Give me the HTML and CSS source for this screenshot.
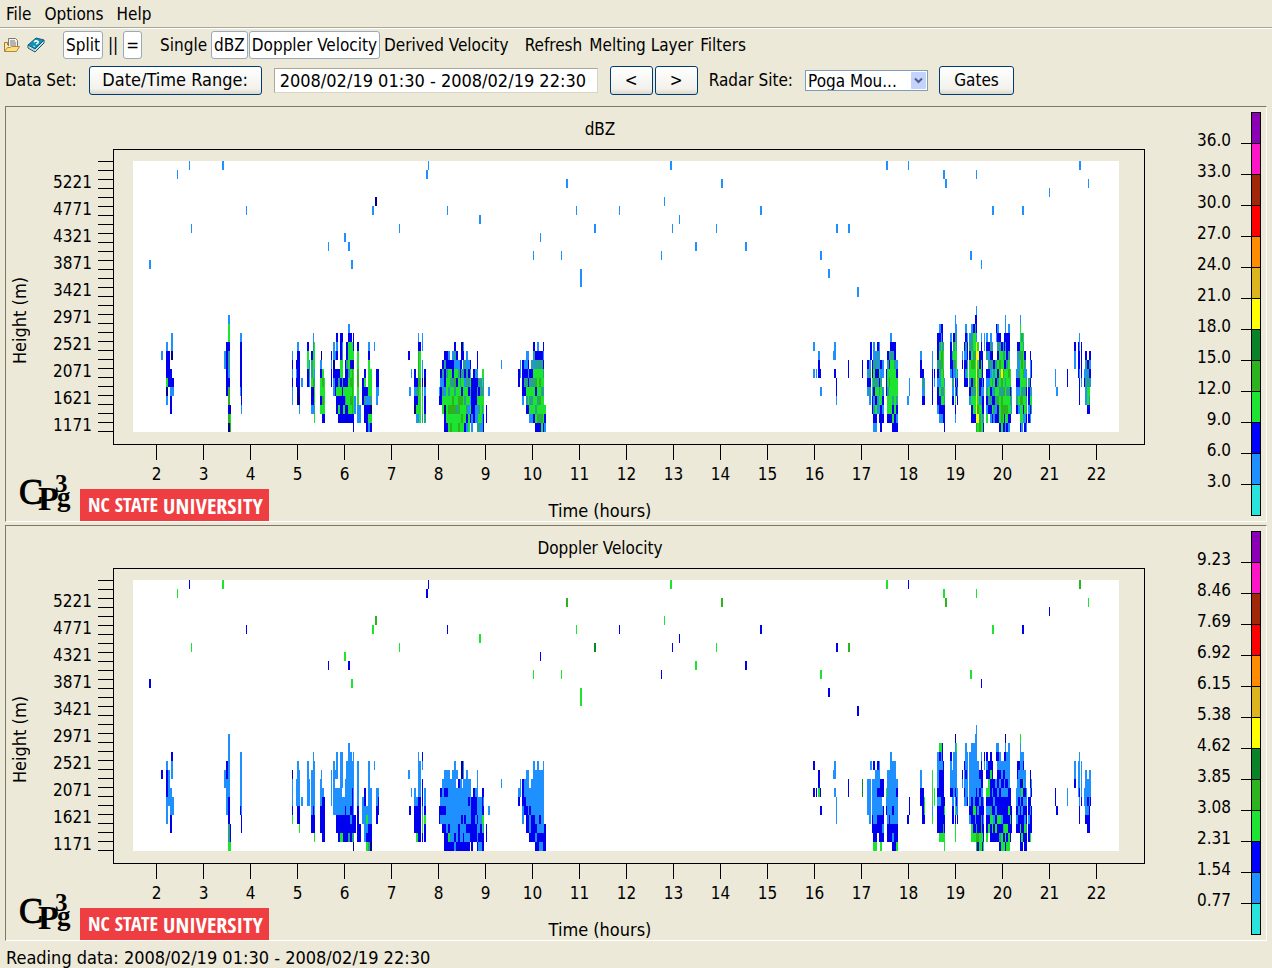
FILE: index.html
```html
<!DOCTYPE html>
<html lang="en">
<head>
<meta charset="utf-8">
<title>Radar Profile Viewer</title>
<link rel="stylesheet" href="styles.css">
</head>
<body>
<nav class="menubar">
  <button class="menu">File</button>
  <button class="menu">Options</button>
  <button class="menu">Help</button>
</nav>
<div class="toolbar">
  <button class="icon-btn" aria-label="Open">
    <svg width="16" height="16" viewBox="0 0 16 16">
      <path d="M4.500 9V1.500h7l2 2V9" fill="#f4f2e8" stroke="#77777a"/>
      <path d="M6 4h5M6 6h6M6 8h6" stroke="#77777a"/>
      <path d="M.5 14.500V5.500h3v2.500" fill="#fbe9a0" stroke="#a08030"/>
      <path d="M.5 14.500l3-4h3l1-1h8l-3 5z" fill="#ffdf80" stroke="#b08a38"/>
    </svg>
  </button>
  <button class="icon-btn" aria-label="Help book">
    <svg width="18" height="16" viewBox="0 0 18 16">
      <path d="M1 8v3l7 4 9-9V3" fill="#e8f4f4" stroke="#0b5670"/>
      <path d="M2 10.500l6 3 8-8" fill="none" stroke="#a8c8c8"/>
      <path d="M1 8l8-7 8 2-9 9z" fill="#1493b4" stroke="#0a5c7c"/>
      <path d="M7 5q2-2 4-.5 1 1.500-2 2.500M7.500 9l-.8.6" fill="none" stroke="#fff" stroke-width="1.500"/>
    </svg>
  </button>
  <div class="group">
    <button class="tool on">Split</button>
    <button class="tool">||</button>
    <button class="tool on">=</button>
  </div>
  <div class="group tight">
    <button class="tool">Single</button>
    <button class="tool on">dBZ</button>
    <button class="tool on">Doppler Velocity</button>
    <button class="tool">Derived Velocity</button>
  </div>
  <div class="group actions">
    <button class="tool">Refresh</button>
    <button class="tool">Melting Layer</button>
    <button class="tool">Filters</button>
  </div>
</div>
<div class="controls">
  <label for="range">Data Set:</label>
  <button class="push wide">Date/Time Range:</button>
  <input class="range" id="range" type="text" value="2008/02/19 01:30 - 2008/02/19 22:30">
  <div class="steps">
    <button class="push step">&lt;</button>
    <button class="push step">&gt;</button>
  </div>
  <label for="site">Radar Site:</label>
  <div class="combo">
    <select id="site"><option>Poga Mou...</option></select>
    <svg class="arrow" width="15" height="17" viewBox="0 0 15 17">
      <rect width="15" height="17" rx="1" fill="#c3d3fd"/>
      <path d="M4 6.500l3.500 3.500L11 6.500" fill="none" stroke="#4d6185" stroke-width="2"/>
    </svg>
  </div>
  <button class="push gates">Gates</button>
</div>
<main class="panels">
  <section class="panel" data-series="0" data-title="dBZ" data-scale="36.0 33.0 30.0 27.0 24.0 21.0 18.0 15.0 12.0 9.0 6.0 3.0"></section>
  <section class="panel" data-series="1" data-title="Doppler Velocity" data-scale="9.23 8.46 7.69 6.92 6.15 5.38 4.62 3.85 3.08 2.31 1.54 0.77"></section>
</main>
<footer class="status">Reading data: 2008/02/19 01:30 - 2008/02/19 22:30</footer>
<template id="chart">
  <div class="chart">
    <h2 class="title"></h2>
    <div class="ytitle"><span>Height (m)</span></div>
    <div class="ylabels"></div>
    <div class="yticks"></div>
    <div class="frame"><svg class="data" viewBox="0 0 986 270" preserveAspectRatio="none" shape-rendering="crispEdges"></svg></div>
    <div class="xlabels"></div>
    <div class="xtitle">Time (hours)</div>
    <div class="logos">
      <svg class="cpg" width="56" height="56" viewBox="0 -10 56 56" role="img" aria-label="CP3g">
        <text class="serif c" x="1" y="29">C</text>
        <text class="serif p" x="20" y="35">P</text>
        <text class="serif three" x="37" y="17">3</text>
        <text class="serif g" x="39" y="31">g</text>
      </svg>
      <div class="ncsu"><b>NC STATE</b><span>UNIVERSITY</span></div>
    </div>
  </div>
  <div class="scale"></div>
</template>
<script src="chart.js"></script>
</body>
</html>
```
FILE: styles.css
```css
* { box-sizing: border-box; }
body {
  margin: 0;
  min-height: 100vh;
  display: flex;
  flex-direction: column;
  background: #ece9d8;
  color: #000;
  font: 17px/20px "DejaVu Sans Condensed", "DejaVu Sans", sans-serif;
}
button, input, select { font: inherit; color: inherit; margin: 0; }
button { padding: 0; border: 0; background: none; white-space: nowrap; }
.menubar {
  display: flex;
  gap: 13px;
  height: 28px;
  padding: 0 6px;
  align-items: center;
  border-bottom: 1px solid #aca899;
}
.toolbar {
  display: flex;
  align-items: center;
  height: 34px;
  padding: 0 0 2px 4px;
  border-top: 1px solid #fff;
}
.icon-btn { display: flex; margin-right: 7px; }
.group { display: flex; align-items: center; gap: 4px; margin-left: 11px; }
.group.tight { gap: 1px; margin-left: 15px; }
.group.actions { gap: 5px; margin-left: 12px; }
.tool { height: 28px; padding: 0 2px; border: 1px solid transparent; border-radius: 3px; }
.tool.on { background: #fff; border-color: #98a9b8; }
.group:not(.tight) .tool.on { padding: 0 2px; }
.group:not(.tight) .tool:not(.on) { padding: 0; }
.controls { display: flex; align-items: center; height: 36px; padding-left: 5px; }
.push {
  height: 29px;
  border: 1px solid #003c74;
  border-radius: 3px;
  background: linear-gradient(#fff, #f2f1ec 80%, #dcd8cc);
}
.wide { width: 173px; margin: 0 12px; font-size: 18px; }
.range {
  width: 324px;
  height: 25px;
  padding: 0 5px;
  border: 1px solid #aca899;
  border-right-color: #d8d5c6;
  border-bottom-color: #d8d5c6;
  background: #fff;
  font-size: 18px;
}
.steps { display: flex; gap: 2px; margin: 0 11px 0 12px; }
.step { width: 43px; }
.combo { display: flex; position: relative; margin: 0 11px 0 12px; }
.combo select {
  width: 123px;
  height: 21px;
  padding: 0 2px;
  appearance: none;
  border: 1px solid #7f9db9;
  border-radius: 0;
  background: #fff;
}
.arrow { position: absolute; right: 2px; top: 2px; pointer-events: none; }
.gates { width: 75px; }
.panels {
  flex: 1;
  display: flex;
  flex-direction: column;
  gap: 3px;
  padding: 8px 5px 0;
}
.panel {
  flex: 1;
  display: flex;
  border: 1px solid #7b7866;
  border-right-color: #fff;
  border-bottom-color: #fff;
}
.chart {
  flex: 1;
  display: grid;
  grid-template-columns: 24px 68px 15px 1fr 49px;
  grid-template-rows: 42px 1fr 30px 46px;
}
.title {
  grid-area: 1 / 1 / 2 / 6;
  margin: 0;
  padding-top: 12px;
  font: inherit;
  text-align: center;
}
.ytitle {
  grid-area: 1 / 1 / 5 / 2;
  display: flex;
  align-items: center;
  justify-content: center;
  padding: 14px 0 0 4px;
}
.ytitle span { writing-mode: vertical-rl; transform: rotate(180deg); font-size: 18px; }
.ylabels {
  grid-area: 2 / 2;
  display: flex;
  flex-direction: column;
  padding: 19px 6px 6px 0;
  text-align: right;
}
.ylabels span { flex: 1; display: flex; align-items: center; justify-content: flex-end; }
.yticks {
  grid-area: 2 / 3;
  display: flex;
  flex-direction: column;
  justify-content: space-between;
  padding: 12px 0 13px;
}
.yticks i { height: 1px; background: #000; }
.frame {
  grid-area: 2 / 4;
  display: flex;
  padding: 11px 25px 12px 19px;
  border: 1px solid #000;
}
.data { flex: 1; min-width: 0; width: 100%; height: 100%; background: #fff; }
.xlabels { grid-area: 3 / 4; display: flex; padding: 0 25px 0 20px; }
.xlabels span { flex: 1 1 0; text-align: center; }
.xlabels span::before {
  content: "";
  display: block;
  width: 1px;
  height: 15px;
  margin: 0 auto 4px;
  background: #000;
}
.xtitle { grid-area: 4 / 1 / 5 / 6; padding-top: 26px; text-align: center; font-size: 18px; }
.logos { grid-area: 4 / 1 / 5 / 5; display: flex; align-items: flex-end; padding-left: 12px; }
.cpg { margin-right: 6px; }
.serif { font-family: "Liberation Serif", serif; font-weight: bold; }
.c { font-size: 36px; font-weight: normal; stroke: #000; }
.p { font-size: 34px; }
.three { font-size: 25px; }
.g { font-size: 27px; }
.ncsu {
  display: flex;
  align-items: center;
  gap: 5px;
  width: 189px;
  height: 32px;
  padding-left: 8px;
  background: #ef3e42;
  color: #fff;
  font: 20px/32px "Open Sans Condensed", "Liberation Sans Narrow", "DejaVu Sans Condensed", sans-serif;
}
.ncsu span { font-size: 22px; font-weight: 300; }
.scale { display: flex; flex-direction: column; width: 72px; padding: 6px 5px 5px 0; }
.step-row { flex: 1; display: flex; }
.step-row span {
  flex: 1;
  align-self: flex-end;
  padding-right: 10px;
  line-height: 8px;
  text-align: right;
}
.step-row i { width: 10px; border-bottom: 1px solid #000; }
.step-row b { width: 10px; border: 1px solid #000; border-top: 0; }
.step-row:first-child b { border-top: 1px solid #000; margin-top: -1px; }
.step-row:last-child i { border: 0; }
.status { height: 27px; padding: 7px 6px 0; font-size: 18px; }
```
FILE: chart.js
```javascript
// Palette keys: L light blue, B blue, N navy, T teal, G/g/D greens, Y yellow.
const COLORS = { L: "#1e90ff", B: "#0000f0", N: "#000090", T: "#28a090", G: "#1de430", g: "#2db31e", D: "#0a8a28", Y: "#ffff00" };
const SCALE = ["#8b00b5", "#ff14c8", "#a02808", "#ff0000", "#ff8c00", "#dcb41e", "#ffff00", "#0a8228", "#2db31e", "#1de430", "#0000ff", "#1e90ff", "#28e4dc"];

// Isolated echoes: x, row, width, dBZ colour(s), velocity colour(s).
const POINTS = `16 11 2 L B|44 1 1 L G|56 0 1 L B|58 7 1 L G|89 0 2 L G|113 5 1 L B|195 9 1 L B|211 8 2 L G|215 9 2 L B|218 11 2 L G
239 5 2 L G|242 4 2 N g|266 7 1 L G|293 1 2 L B|295 0 1 L B|314 5 1 L B|346 6 2 L G|400 10 1 L G|407 8 1 L B|428 10 1 L G
433 2 2 L g|443 5 1 L G|447 12 2 LL GG|461 7 2 L D|486 5 1 L B|528 10 1 L B|531 4 1 L G|537 0 2 L G|539 7 1 L B|546 6 1 L B
562 9 2 L G|583 7 1 L G|588 2 2 L g|612 9 2 L B|627 5 2 L B|687 10 2 L G|695 12 2 L B|703 7 2 L B|715 7 2 L g|724 14 2 L B
753 0 2 L G|775 0 1 L B|810 1 2 L G|812 2 2 L g|837 10 2 L G|843 1 1 L G|848 11 1 L B|859 5 2 L G|889 5 2 L B|916 3 1 L B|946 0 2 L g|955 2 1 L G`;

// Echo columns: x, first row, width, dBZ colours by row, velocity colours by row.
const COLUMNS = `28 21 2 L B|33 20 2 LBBBGNL LBBBLLL|35 21 2 BBBB LLLL|37 23 2 BBLBB LLLBB|38 19 2 LLN BLL|39 24 2 BL LL
91 21 2 LL LL|93 20 2 BBBBBB BBLLLL|95 17 2 LGGBTTLBggBgN LLLLLLLBBBTTG|97 27 1 NGg BBG|107 19 1 LBBBBBL LLLLLLB|108 19 1 LBBBBBBBL LLLLLLLBB
159 21 1 LBLBLL NLLLBG|163 22 1 BLB LLL|164 20 2 LBBBBNN LLLLLBB|166 21 1 BBBBBNL LLLLBBG|168 24 2 L L
174 20 2 BGGBB LLLLL|176 22 1 LTL LLL|178 21 2 BTTGBBL LLLLLBB|180 19 1 LTGGGgNBL LLLLLLBBB|181 20 1 GGGLTGGTG LLLLLLBBG
187 22 2 LBGGBG LLLBBB|188 21 1 N L|189 23 2 GgGgGB LBBBBB|191 24 1 GGGGB BBBBB
198 21 1 BLBB LLLL|200 20 2 LLNBLL LLLLLL|202 21 2 L.BBB L.LLL|203 19 2 BLB.BBGBB LLL.LLLBB|205 23 2 BTGBGB LLLBBB|207 19 2 BBBGGBGBBB LLLLLLLBBG|209 19 1 BLTGGTBBBB LLLL.LLBBG|210 23 2 .BGBGB .LLBBB|212 22 2 BBBGTBB LLLBBBB|213 20 2 BBTBBGGBB LLLLLLBBB|215 18 2 LBGGGTGGGGB LLLLLLLLBBT|217 19 2 BGGBGgGgGB LLLLLLBLBB|219 20 1 GGNgggggB LLLBBBBBT|220 19 1 BBGBGGGGGBB LLLLLLLBBTN|221 26 2 LL BB
224 20 2 BGGggGGLL LLLLLBBBB|226 27 2 LL BB|229 24 2 BBB LLL|231 23 2 BGBTBB BBLLLL|233 25 2 BLBBB LGLBG|235 20 2 LBGGGGLBGL LLLLLLLBBT|237 23 2 GGGTNGB LLLLBBN|241 20 1 L L|243 23 2 BBLL LLBB|245 23 1 BBL LBB
275 21 2 B L|278 23 1 L L|276 25 2 L B|281 23 2 BBLBN LLBBB|283 24 2 BTBGL LBBBG|285 19 1 LBgggggGGL LLLLLBBBBB|286 20 2 BGGGgGGGG LLLLBBBBB|289 19 1 LL.LLBTGGT BL.BBBLGGB|291 23 2 BNLBBT LLBGBB
306 25 2 LB BB|307 23 2 BLBB BLBL|309 22 2 BTLTGG LLLBLB|311 21 2 BTBBLGNBB LLBLBLBBB|313 21 2 BBTGGGGGB LLBLLLLBB|315 21 2 LBGGTGgGGL LLLLLLBGBG|317 22 2 BGTGGgGg LLLLLLLB|319 21 2 LBBTGggGGB LLLLLLLLBB|321 20 2 BTLGgTGgGGL LLLLLLLLBLB|323 21 2 BLGBGGTGGT L.LLLLLLBB|325 22 2 LTGGggGg BLLLLBBB|327 22 2 BBTGgGGG LLLLLLLB|328 20 2 NB.TGBgGgG NN.LLLBLLB|330 20 1 LBLTGGGGGG LLLLLLLLBB|331 22 2 TBLGTGGB LLLLBLLB|333 21 2 LLTTGGTBLG LLLLLLBLBB|335 22 2 LBTBGLGGB LLBLLBLBB|337 22 1 BTGTLGB LLLLLBB|338 24 2 BBBBLL BBBBBB|340 23 2 BBBBBB BBBBBB|342 23 2 LBBBLL LBBLBB|344 21 1 BBTBTGLLT LLLLLBLLB|345 24 2 TBGTGTL LLLLBLB|347 24 2 TTGGGLT LLLBBLB|349 23 1 GGTGTLTL BBBGGBBB|350 23 1 GLTGGBBT BLBGLBBB|353 27 1 BB BB|355 25 2 L L|368 22 1 L L
385 23 2 BB LB|387 22 1 LL LL|389 22 2 BBBBL BBBLL|391 22 2 LBTB LLBB|393 21 2 LLBTGTB LLLLBBB|395 21 1 LBLBGGB LLLLLBB|396 23 2 BTGTGL LLBLLB|398 22 2 TBTGTGL LLLLBBB|400 20 2 BTLGTGGGB LLLLLLBBB|402 21 2 BTGgBGTGB LLLLLLBLB|404 20 2 LBTGGGTGgB LLLLLLLLBB|406 21 2 BTGgGgGTB LLLLLBLBL|408 21 2 BTGGTGGgGL LLLLLLLBLB|410 20 1 BLBTGTGGGBL LLLLLLLLBBB|411 27 2 GBL BBB
680 20 2 L..L B..B|683 23 1 L B|685 21 2 LBB BBG|687 23 1 B B|687 25 2 L B|700 21 1 L L|701 20 2 LL.B LL.L|703 24 1 BBL LLL|715 22 1 BB BB|729 22 1 BB DD
734 22 2 BLBL LLLL|736 22 2 LTBTL LLLLL|737 20 2 BB L.|739 22 2 BNGTBB LLLLBB|740 20 2 LLTGTBLTBL B.LLLLLBBG|742 21 2 LTBTGNGBL LLLLLLBBG|744 20 2 BTLBTGLL BLLBLLBB|746 20 1 LLTGBTGTB LLLBLLBBB|747 22 2 BLTGGBBB BBLLBBBG|749 22 2 LL.TBLB. BB.LBLB.|750 25 1 LB BB|753 23 1 BBB GLB|754 21 2 BTGGTGGB LLLLLLBB|756 21 2 TBGgGGGB LLLLLBBB|757 19 2 LBTGGGGGGB LLLLLLLLBB|759 20 2 BTGGGGTBGB LLLLLBLBLB|761 20 2 BBTGGGGGBB LLLLLLLBBB|763 22 2 LBGGTBLB LBLLLBBG
774 26 2 L B|776 24 1 LL BB|787 21 2 LBB. LLBB|789 23 2 BTLB BBBB|791 24 1 LTB GGB|799 21 1 LLBBBB GGGGLG|801 23 1 BL GG
804 19 2 BBBTBLBBL LLLLBLBBB|806 18 2 LBTGTTLGBBL GBLBBBLBBBG|808 18 2 BLGggGGTGBL GLLBBBBBBBG|810 20 1 TGGgGTGBB BBBBBBBTG|811 24 1 LGTBBB BGBBGG|809 18 1 BBT BBL
817 19 2 LBBBL BLLLB|819 21 2 TBBTLB LLBLBB|820 19 2 BTGTL. LLLLL.|822 17 1 LLTGGgLBLGBL NLLLLLBLGBGG|823 18 1 LTTGGGLB GLLLLLBL|824 23 1 LBTB LLLB
829 21 1 LB BL|831 20 2 BLBBB BLLBL|832 18 2 LBTLBLB LLLBLLL|834 19 1 LBBTGB LLLLLB|836 19 2 LTBGGTBL LLLLLLBL|838 18 2 LTTGgGBTGBB LLLLLLBBBGG|840 18 2 BGGTgGgTGGB LLLLLLLGBBG|842 17 2 BTGGgGGGTGGB LLLLLLLBGLBG|843 16 1 LBBLYYYYYYYYYg LLLLLLLBBBBTgg|844 20 2 GYGTGGGgYGg LLLLBLBBgBD|846 21 2 BBGBBLGTgg BLBLBBBGGD|848 19 1 LBBGTBLTGGG LBBBLBBTgGG|849 21 1 BBBLLBBTGB BBLBBBBGBG|850 24 1 BLBBTB LBLBBG|851 19 1 LL BL
853 19 2 LBT.BLTBLG BLB.GBLBBG|855 20 2 BLTBLGTB. BBGGBLBG.|857 19 2 LTBTLGBTBL BBGBBBTGBB|859 20 1 LNTGTLBGB BBBLBBGGB|860 22 2 BLGTBTL BBLBLBB|862 22 2 TGBGTLB LBBLBGB|863 18 1 BL LB|864 18 2 LBTBGBTGgBB LBLBBLBBGBB|866 19 2 BTGgGGTGGGB LLBLBBBGBTB|868 20 2 BGGYgTgggG LLBLBBLBGG|870 20 2 LTGgGTGgGB LBBLBBBTBG|871 19 2 BBTBGGgGgB BLBLLBBBGB|872 17 1 LLBTGBGTGGgGL NLBLLBLBBBGGB|873 19 2 BBBTGGTGgGB LLLBLBBBGBG|875 18 2 LBBTGgGTGGBL LLLLLBBGBBGG|877 23 1 GGBgGB BBBGBB|878 25 1 TLL BBB
883 23 2 LBLTB LLBLB|884 20 1 BLT BBL|885 20 2 BTLTBLGL BLLLBLBB|887 17 1 LGGGTGGGGgGGB GLLLLBLLBBGBB|888 19 2 TGggGGTgGGL LLLBGBLBBGB|890 19 1 GTGGgGTGBL LBLGBLBBBB|891 21 2 BTLGTGGLB LLBLBLGBB|893 23 1 LTBLTBL LLBBLBB|895 24 2 TBBLB. BBLBB.|897 21 1 BLLBTGBL BNLBLBBG|898 22 1 BB.LGT LB.BBB
922 23 1 LL BB|923 25 2 L B|934 23 1 BB LL|941 20 2 BLL LLB|945 20 2 BBBB LLLL|946 19 1 LLBBLBBB LLLLBLBB|948 20 1 BBBBL LLLLB|951 23 1 LB LL|952 21 2 BTLTLL LLLLLB|954 22 2 BTTGGB LLBLBB|956 21 1 BTBTGTB LLLLBBB|957 21 1 BLBL LLLB`;

const make = (tag, parent, text) => {
  const node = document.createElement(tag);
  if (text) node.textContent = text;
  parent.append(node);
  return node;
};

const draw = (svg, series) => {
  for (const entry of `${POINTS}\n${COLUMNS}`.split(/[|\n]/)) {
    const fields = entry.split(" ");
    const [x, row, width] = fields;
    [...fields[3 + series]].forEach((key, i) => {
      if (key === ".") return;
      const cell = document.createElementNS("http://www.w3.org/2000/svg", "rect");
      cell.setAttribute("x", x);
      cell.setAttribute("y", (Number(row) + i) * 9);
      cell.setAttribute("width", width);
      cell.setAttribute("height", 9);
      cell.setAttribute("fill", COLORS[key]);
      svg.append(cell);
    });
  }
};

for (const panel of document.querySelectorAll(".panel")) {
  panel.append(document.getElementById("chart").content.cloneNode(true));
  panel.querySelector(".title").textContent = panel.dataset.title;
  const ylabels = panel.querySelector(".ylabels");
  for (let h = 5221; h > 1000; h -= 450) make("span", ylabels, String(h));
  const yticks = panel.querySelector(".yticks");
  for (let i = 0; i < 31; i++) make("i", yticks);
  const xlabels = panel.querySelector(".xlabels");
  for (let h = 2; h <= 22; h++) make("span", xlabels, String(h));
  const labels = panel.dataset.scale.split(" ");
  const scale = panel.querySelector(".scale");
  SCALE.forEach((color, i) => {
    const row = make("div", scale);
    row.className = "step-row";
    make("span", row, labels[i] || "");
    make("i", row);
    make("b", row).style.background = color;
  });
  draw(panel.querySelector(".data"), Number(panel.dataset.series));
}
```
